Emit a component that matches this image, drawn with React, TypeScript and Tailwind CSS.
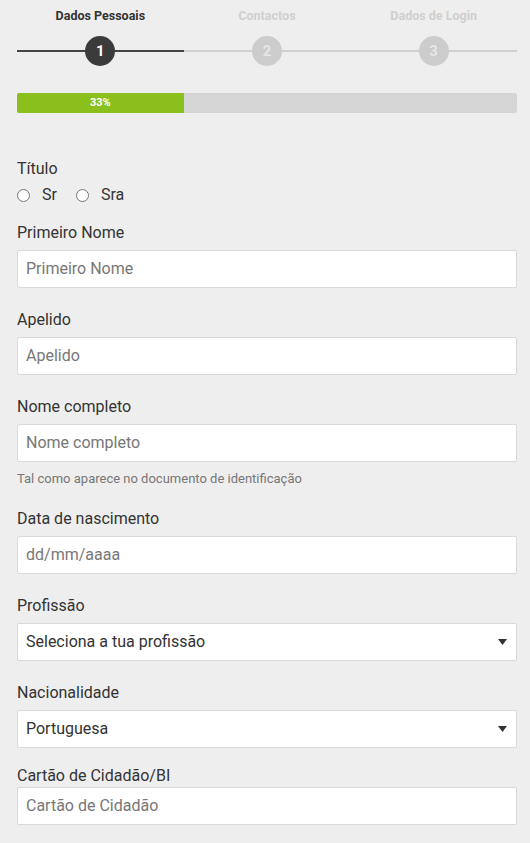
import React from "react";

const font = { fontFamily: "Roboto, 'Noto Sans', sans-serif" };

function Step({ n, label, active }: { n: number; label: string; active: boolean }) {
  return (
    <div className="flex flex-col items-center">
      <div className={`text-[12.5px] leading-[16px] font-bold ${active ? "text-[#333]" : "text-[#cfcfcf]"}`}>{label}</div>
      <div className="relative mt-[12px] h-[30px] w-full flex items-center justify-center">
        <div className={`absolute left-0 right-0 top-[14px] h-[2px] ${active ? "bg-[#444]" : "bg-[#cfcfcf]"}`} />
        <div
          className={`relative z-10 w-[30px] h-[30px] rounded-full flex items-center justify-center text-[15px] font-bold ${
            active ? "bg-[#3b3b3b] text-white" : "bg-[#cccccc] text-[#e6e6e6]"
          }`}
        >
          {n}
        </div>
      </div>
    </div>
  );
}

function Label({ children, className = "" }: { children: React.ReactNode; className?: string }) {
  return <div className={`text-[16px] leading-[20px] text-[#333] ${className}`}>{children}</div>;
}

function TextBox({ placeholder }: { placeholder: string }) {
  return (
    <div className="h-[38px] w-full bg-white border border-[#d9d9d9] rounded-[2px] flex items-center px-[8px] text-[16px] text-[#777]">
      {placeholder}
    </div>
  );
}

function SelectBox({ value }: { value: string }) {
  return (
    <div className="h-[38px] w-full bg-white border border-[#d9d9d9] rounded-[2px] flex items-center justify-between pl-[8px] pr-[9px] text-[16px] text-[#333]">
      <span>{value}</span>
      <svg width="9" height="6" viewBox="0 0 9 6">
        <path d="M0 0 L9 0 L4.5 6 Z" fill="#333" />
      </svg>
    </div>
  );
}

function Radio({ label }: { label: string }) {
  return (
    <div className="flex items-center">
      <div className="w-[13px] h-[13px] rounded-full border border-[#767676] bg-white" />
      <span className="ml-[12px] text-[16px] leading-[20px] text-[#333]">{label}</span>
    </div>
  );
}

export default function App() {
  return (
    <div className="min-h-screen w-full bg-[#eeeeee] pl-[17px] pr-[13px] pt-[8px] pb-[20px]" style={font}>
      <div className="grid grid-cols-3 w-full">
        <Step n={1} label="Dados Pessoais" active />
        <Step n={2} label="Contactos" active={false} />
        <Step n={3} label="Dados de Login" active={false} />
      </div>

      <div className="mt-[27px] h-[20px] w-full bg-[#d5d5d5] rounded-[2px] flex">
        <div className="h-full w-1/3 bg-[#8bbf1c] rounded-l-[2px] flex items-center justify-center text-white text-[11px] font-bold">
          33%
        </div>
      </div>

      <Label className="mt-[46px]">Título</Label>
      <div className="mt-[6px] h-[20px] flex items-center gap-[19px]">
        <Radio label="Sr" />
        <Radio label="Sra" />
      </div>

      <Label className="mt-[18px] mb-[7px]">Primeiro Nome</Label>
      <TextBox placeholder="Primeiro Nome" />

      <Label className="mt-[22px] mb-[7px]">Apelido</Label>
      <TextBox placeholder="Apelido" />

      <Label className="mt-[22px] mb-[7px]">Nome completo</Label>
      <TextBox placeholder="Nome completo" />
      <div className="mt-[9px] text-[13px] leading-[16px] text-[#777]">Tal como aparece no documento de identificação</div>

      <Label className="mt-[22px] mb-[7px]">Data de nascimento</Label>
      <TextBox placeholder="dd/mm/aaaa" />

      <Label className="mt-[22px] mb-[7px]">Profissão</Label>
      <SelectBox value="Seleciona a tua profissão" />

      <Label className="mt-[22px] mb-[7px]">Nacionalidade</Label>
      <SelectBox value="Portuguesa" />

      <Label className="mt-[18px] mb-[1px]">Cartão de Cidadão/BI</Label>
      <TextBox placeholder="Cartão de Cidadão" />
    </div>
  );
}
